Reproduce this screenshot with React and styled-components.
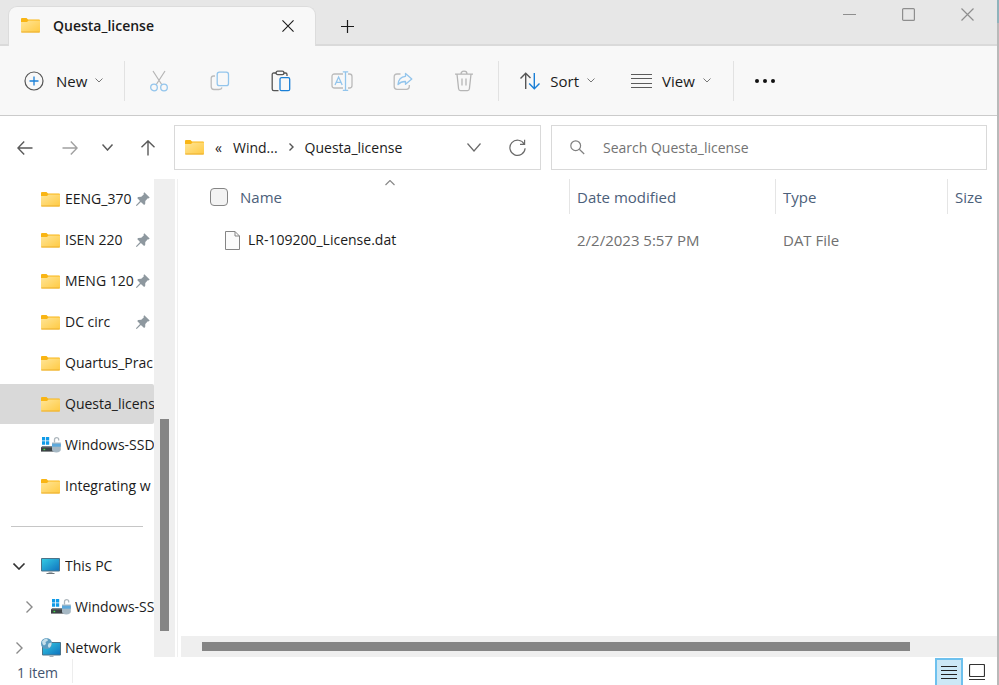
import React, { useState } from 'react';
import styled, { createGlobalStyle } from 'styled-components';

const GlobalStyle = createGlobalStyle`
    * {
        box-sizing: border-box;
    }
    body {
        margin: 0;
        background: #FFFFFF;
        color: #1B1B1B;
        font-family: "Open Sans", "Noto Sans", sans-serif;
        font-size: 14px;
        line-height: 20px;
    }
    button, input {
        font: inherit;
        color: inherit;
    }
    svg {
        display: block;
        flex-shrink: 0;
        fill: none;
    }
`;

const Window = styled.div`
    height: 100vh;
    display: flex;
    flex-direction: column;
    overflow: hidden;
    border-right: 2px solid;
    border-image: linear-gradient(#8FB3BB 24px, #B9B9B9 24px) 1;
`;

const PlainButton = styled.button`
    display: flex;
    align-items: center;
    justify-content: center;
    padding: 0;
    border: 0;
    background: none;
    cursor: pointer;
`;

/* title bar */
const TitleBar = styled.header`
    flex: none;
    height: 46px;
    display: flex;
    align-items: flex-end;
    padding-left: 8px;
    background: #E7E7E7;
    box-shadow: inset 0 -2px #DADADA;
`;
const Tab = styled.div`
    width: 308px;
    height: 40px;
    display: flex;
    align-items: center;
    gap: 13px;
    padding: 0 15px 2px 12px;
    border: 1px solid #DCDCDC;
    border-bottom: 0;
    border-radius: 9px 9px 0 0;
    background: #F8F8F8;
`;
const TabTitle = styled.span`
    flex: 1;
    font-weight: 600;
`;
const TabClose = styled(PlainButton)`
    width: 24px;
    height: 24px;
`;
const NewTab = styled(PlainButton)`
    width: 40px;
    height: 40px;
    margin-left: 11px;
`;
const WindowButtons = styled.div`
    align-self: flex-start;
    display: flex;
    margin-left: auto;
`;
const WindowButton = styled(PlainButton)`
    width: 59px;
    height: 28px;
    color: #8E8E8E;
`;

/* command bar */
const Toolbar = styled.div`
    flex: none;
    height: 70px;
    display: flex;
    align-items: center;
    padding-left: 24px;
    background: #F8F8F8;
    border-bottom: 1px solid #CBCBCB;
    font-size: 15px;
`;
const MenuButton = styled(PlainButton)`
    height: 40px;
`;
const MenuText = styled.span`
    margin: 0 8px 0 ${props => props.$gap || 10}px;
`;
const IconButton = styled(PlainButton)`
    width: 61px;
    height: 40px;
`;
const Divider = styled.span`
    width: 1px;
    height: 40px;
    margin: 0 ${props => props.$right || 0}px 0 ${props => props.$left || 0}px;
    background: #E2E2E2;
`;
const MenuGroup = styled.div`
    display: flex;
    gap: 35px;
`;

/* address row */
const AddressRow = styled.div`
    flex: none;
    height: 63px;
    display: grid;
    grid-template-columns: 170px minmax(0, 367fr) 10px minmax(0, 436fr);
    align-items: center;
    padding: 0 10px 0 4px;
`;
const NavButtons = styled.div`
    display: flex;
`;
const NavButton = styled(PlainButton)`
    flex: none;
    width: ${props => props.$w}px;
    height: 40px;
    color: ${props => (props.disabled ? '#A0A0A0' : '#5A5A5A')};
`;
const AddressBar = styled.nav`
    height: 45px;
    display: flex;
    align-items: center;
    gap: 11px;
    padding: 0 14px 0 10px;
    border: 1px solid #D9D9D9;
`;
const Crumb = styled.a`
    color: #1B1B1B;
    text-decoration: none;
    white-space: nowrap;
`;
const AddressButtons = styled.div`
    display: flex;
    gap: 27px;
    margin-left: auto;
    color: #6A6A6A;
`;
const SearchBox = styled.label`
    grid-column: 4;
    height: 45px;
    display: flex;
    align-items: center;
    gap: 18px;
    padding-left: 18px;
    border: 1px solid #D9D9D9;
`;
const SearchInput = styled.input`
    flex: 1;
    min-width: 0;
    padding: 0;
    border: 0;
    outline: 0;
    background: none;
    &::placeholder {
        color: #737373;
        opacity: 1;
    }
`;

/* body */
const Main = styled.main`
    flex: 1;
    min-height: 0;
    display: flex;
`;
const Sidebar = styled.aside`
    flex: none;
    width: 178px;
    display: flex;
    overflow: hidden;
    border-right: 1px solid #F0F0F0;
`;
const Tree = styled.ul`
    flex: 1;
    min-width: 0;
    margin: 0;
    padding: 0;
    list-style: none;
    overflow: hidden;
`;
const TreeItem = styled.li`
    height: 41px;
`;
const TreeLine = styled.li`
    height: 39px;
    display: flex;
    align-items: center;
    padding: 0 11px;
    &::after {
        content: "";
        flex: 1;
        height: 1px;
        background: #C6C6C6;
    }
`;
const TreeButton = styled(PlainButton)`
    width: 100%;
    height: 40px;
    justify-content: flex-start;
    padding-left: ${props => (props.$nested ? 21 : 11)}px;
    border-radius: 0 2px 2px 0;
    background: ${props => (props.$active ? '#D9D9D9' : 'none')};
`;
const Twist = styled.span`
    flex: none;
    width: 16px;
    margin-right: 14px;
    display: flex;
    justify-content: center;
    color: ${props => (props.$open ? '#333333' : '#8A8A8A')};
`;
const TreeLabel = styled.span`
    flex: 1;
    min-width: 0;
    margin-left: ${props => (props.$wide ? 4 : 5)}px;
    overflow: hidden;
    text-align: left;
    white-space: nowrap;
`;
const PinSlot = styled.span`
    flex: none;
    width: 20px;
    padding-left: 2px;
`;
const VerticalTrack = styled.div`
    flex: none;
    width: 21px;
    margin-right: 2px;
    display: flex;
    flex-direction: column;
    align-items: center;
    justify-content: flex-end;
    padding-bottom: 26px;
    background: #EFEFEF;
`;
const VerticalThumb = styled.div`
    width: 9px;
    height: 47%;
    background: #858585;
`;

const Files = styled.section`
    flex: 1;
    min-width: 0;
    display: flex;
    flex-direction: column;
    padding-left: 3px;
`;
const FileArea = styled.div`
    flex: 1;
    min-height: 0;
    padding-left: 29px;
    overflow: hidden;
`;
const Table = styled.table`
    width: 100%;
    table-layout: fixed;
    border-collapse: separate;
    border-spacing: 0;
    font-size: 15px;
    text-align: left;
    white-space: nowrap;
`;
const HeadCell = styled.th`
    position: relative;
    width: ${props => (props.$w ? `${props.$w}px` : 'auto')};
    height: 35px;
    padding: 0 0 0 ${props => (props.$first ? 0 : 7)}px;
    border-left: ${props => (props.$first ? 0 : 1)}px solid #E5E5E5;
    color: #4C607A;
    font-weight: 400;
`;
const NameHead = styled.div`
    display: flex;
    align-items: center;
    gap: 12px;
`;
const SortMark = styled.span`
    position: absolute;
    top: 1px;
    left: 50%;
    margin-left: -5px;
    color: #8A8A8A;
`;
const CheckBox = styled.input`
    appearance: none;
    width: 18px;
    height: 18px;
    margin: 0;
    border: 1px solid #858585;
    border-radius: 4px;
    background: #F3F3F3;
    &:checked {
        background: #0078D4;
    }
`;
const Cell = styled.td`
    height: 52px;
    padding: 0 0 0 ${props => (props.$first ? 15 : 8)}px;
    color: ${props => (props.$first ? '#1B1B1B' : '#707070')};
`;
const FileName = styled.div`
    display: flex;
    align-items: center;
    gap: 8px;
    font-size: 14px;
`;
const HorizontalTrack = styled.div`
    flex: none;
    height: 21px;
    display: flex;
    align-items: center;
    padding-left: 21px;
    background: #EFEFEF;
`;
const HorizontalThumb = styled.div`
    width: 89%;
    height: 9px;
    background: #858585;
`;

/* status bar */
const StatusBar = styled.footer`
    flex: none;
    height: 28px;
    display: flex;
    align-items: center;
    padding: 0 6px 0 17px;
    color: #44546F;
`;
const StatusText = styled.span`
    width: 56px;
    padding-top: 4px;
    border-right: 1px solid #EDEDED;
`;
const ViewButtons = styled.div`
    align-self: flex-end;
    display: flex;
    margin-left: auto;
`;
const ViewButton = styled(PlainButton)`
    width: 28px;
    height: 27px;
    border: ${props => (props.$active ? '2px solid #6EC1EE' : '0')};
    border-bottom: 0;
    background: ${props => (props.$active ? '#CCE8F6' : 'none')};
`;

const FolderIcon = () => (
    <svg width="19" height="15" viewBox="0 0 19 15">
        <defs>
            <linearGradient id="folder" x1="0" y1="0" x2="1" y2="1">
                <stop offset="0" stopColor="#FFE597" />
                <stop offset="1" stopColor="#FFCA42" />
            </linearGradient>
        </defs>
        <path d="M0 1Q0 0 1 0H5.5L7 1.5H18Q19 1.5 19 2.5V5H0Z" fill="#F9B514" />
        <path d="M0 4H6L7.5 2.6H19V13.5Q19 14.5 18 14.5H1Q0 14.5 0 13.5Z" fill="url(#folder)" />
        <path d="M0.3 14H18.7" stroke="#EBAE2C" />
    </svg>
);

const PinIcon = () => (
    <svg width="14" height="14" viewBox="0 0 14 14">
        <path d="M8.3 0.3L13.7 5.5L12.4 6.6L11.8 6.3L9.3 9.1L9.2 12L8.1 12.9L4.9 10L1 13.8L0 13.9L0.2 12.9L4 9L1.2 6L2.2 4.9L5.3 4.8L7.9 2.2L7.5 1.2Z" fill="#8E989F" />
    </svg>
);

const DriveIcon = () => (
    <svg width="20" height="16" viewBox="0 0 20 16">
        <path d="M1 0H4.2V3.5H1ZM5 0H8.2V3.5H5ZM1 4.3H4.2V7.8H1ZM5 4.3H8.2V7.8H5Z" fill="#109BE8" />
        <path d="M1.2 9H12V10.5H0Z" fill="#7D858A" />
        <path d="M0 10.2H17V14.6H0Z" fill="#3B4145" />
        <path d="M2.5 11.8H4.2V13.2H2.5Z" fill="#45E04B" />
        <path d="M13.5 5.5V2.7Q13.5 0.7 15.6 0.7Q17.7 0.7 17.7 2.7V3.5" stroke="#AEB7BD" strokeWidth="1.3" />
        <path d="M11 5.5H19.8V12.5Q19.8 15.2 15.4 15.6Q11 15.2 11 12.5Z" fill="#A6B8C4" />
        <path d="M11 6.7H19.8V9.7H11Z" fill="#5DA9DC" />
    </svg>
);

const Screen = () => (
    <>
        <defs>
            <linearGradient id="screen" x1="0" y1="0" x2="1" y2="1">
                <stop offset="0" stopColor="#35CDE4" />
                <stop offset="1" stopColor="#0F71BE" />
            </linearGradient>
        </defs>
        <path d="M0.5 0.5H18.5V13H0.5Z" fill="url(#screen)" stroke="#4C7389" />
        <path d="M7.5 13.5H11.5V15H7.5Z" fill="#A9B1B6" />
        <path d="M5.5 15H13.5V16H5.5Z" fill="#6D757A" />
    </>
);

const PcIcon = () => (
    <svg width="20" height="16" viewBox="0 0 20 16">
        <Screen />
    </svg>
);

const NetworkIcon = () => (
    <svg width="20" height="20" viewBox="0 0 20 20">
        <g transform="translate(1 4)">
            <Screen />
        </g>
        <circle cx="5.5" cy="5.5" r="5.5" fill="#5D9CC0" />
        <path d="M1 3.5Q3 0.5 6 0.5L7 2.5L4.5 4L5 6L3 7.5L1.5 6ZM7.5 5.5L10.5 4.5Q10.8 8 8 10L6.8 8Z" fill="#C6DFEA" />
    </svg>
);

const FileIcon = () => (
    <svg width="15" height="19" viewBox="0 0 15 19">
        <path d="M0.5 0.5H10L14.5 5V18.5H0.5Z" fill="#FBFBFB" stroke="#858585" />
        <path d="M10 0.5V5H14.5" stroke="#858585" />
    </svg>
);

const Chevron = ({ w = 8, h = 4, sw = 1, dir = 'down', color = 'currentColor' }) => {
    const d = {
        down: `M0.5 0.5L${w / 2} ${h}L${w - 0.5} 0.5`,
        up: `M0.5 ${h}L${w / 2} 0.5L${w - 0.5} ${h}`,
        right: `M0.5 0.5L${w} ${h / 2}L0.5 ${h - 0.5}`,
    };
    return (
        <svg width={w + 1} height={h + 1} stroke={color} strokeWidth={sw}>
            <path d={d[dir]} />
        </svg>
    );
};

const Cross = ({ size }) => (
    <svg width={size} height={size} viewBox="0 0 13 13" stroke="currentColor" strokeWidth="1.2">
        <path d="M0.5 0.5L12.5 12.5M12.5 0.5L0.5 12.5" />
    </svg>
);

const NewIcon = () => (
    <svg width="20" height="20" viewBox="0 0 20 20">
        <circle cx="10" cy="10" r="9" stroke="#555555" strokeWidth="1.2" />
        <path d="M10 5.5V14.5M5.5 10H14.5" stroke="#1A7FD6" strokeWidth="1.3" />
    </svg>
);

const CutIcon = () => (
    <svg width="20" height="22" viewBox="0 0 20 22" strokeWidth="1.2">
        <path d="M4 1L12.7 14.5M16 1L7.3 14.5" stroke="#B5B5B5" />
        <circle cx="5" cy="17.5" r="3.3" stroke="#93C5EC" strokeWidth="1.3" />
        <circle cx="15" cy="17.5" r="3.3" stroke="#93C5EC" strokeWidth="1.3" />
    </svg>
);

const CopyIcon = () => (
    <svg width="20" height="20" viewBox="0 0 20 20" strokeWidth="1.3">
        <path d="M5 5H3.5Q1.2 5 1.2 7.3V15.5Q1.2 18.5 4 18.5H9Q11.5 18.5 12 16.5" stroke="#BBBBBB" />
        <rect x="7.2" y="1.2" width="11.3" height="13.5" rx="2.2" stroke="#93C5EC" />
    </svg>
);

const PasteIcon = () => (
    <svg width="20" height="22" viewBox="0 0 20 22" strokeWidth="1.3">
        <path d="M5.5 3H2.8Q1.2 3 1.2 4.6V19Q1.2 20.6 2.8 20.6H7.5M12.5 3H14.5Q16 3 16 4.6V6" stroke="#555555" />
        <rect x="5" y="1.2" width="8" height="3.4" rx="1.7" stroke="#555555" />
        <rect x="9" y="7.7" width="9.7" height="13" rx="1.5" fill="#F8F8F8" stroke="#1A7FD6" />
    </svg>
);

const RenameIcon = () => (
    <svg width="22" height="20" viewBox="0 0 22 20" strokeWidth="1.3">
        <path d="M12 3H3.5Q1 3 1 5.5V14.5Q1 17 3.5 17H12M17 3H18.5Q21 3 21 5.5V14.5Q21 17 18.5 17H17" stroke="#BBBBBB" />
        <path d="M4 14L7.6 6L11.2 14M5.3 11.3H9.9M14.5 1V19.4M11.8 0.8H17.2M11.8 19.4H17.2" stroke="#93C5EC" />
    </svg>
);

const ShareIcon = () => (
    <svg width="20" height="20" viewBox="0 0 20 20" strokeWidth="1.3">
        <path d="M7.5 3H4Q1.2 3 1.2 5.8V15.5Q1.2 18.3 4 18.3H13.5Q16.3 18.3 16.3 15.5V14" stroke="#BBBBBB" />
        <path d="M12.5 2.5L18.8 8L12.5 13.3V10.5Q8 10.3 5 13.5Q5.5 6 12.5 5.3Z" stroke="#93C5EC" strokeLinejoin="round" />
    </svg>
);

const DeleteIcon = () => (
    <svg width="20" height="22" viewBox="0 0 20 22" strokeWidth="1.3" stroke="#B5B5B5">
        <path d="M1 4.2H19M7 4Q7 1.2 10 1.2Q13 1.2 13 4M3 4.2L4.6 18.8Q4.8 20.6 6.5 20.6H13.5Q15.2 20.6 15.4 18.8L17 4.2M8 8.5V15.5M12 8.5V15.5" />
    </svg>
);

const SortIcon = () => (
    <svg width="20" height="18" viewBox="0 0 20 18" strokeWidth="1.4">
        <path d="M5.7 17V1.5M0.5 6.5L5.7 1.2L10.5 6" stroke="#555555" />
        <path d="M14.3 1V16.5M9.2 11.5L14.3 16.8L19.5 11.5" stroke="#1A7FD6" />
    </svg>
);

const ViewIcon = () => (
    <svg width="21" height="14" viewBox="0 0 21 14" stroke="#5C5C5C">
        <path d="M0 0.5H21M0 4.5H21M0 9.5H21M0 13.5H21" />
    </svg>
);

const DotsIcon = () => (
    <svg width="22" height="6" viewBox="0 0 22 6">
        <circle cx="3" cy="3" r="2" fill="#111111" />
        <circle cx="11" cy="3" r="2" fill="#111111" />
        <circle cx="19" cy="3" r="2" fill="#111111" />
    </svg>
);

const ArrowIcon = ({ turn = 0 }) => (
    <svg width="16" height="16" viewBox="0 0 16 16" stroke="currentColor" strokeWidth="1.4">
        <path d="M15.5 8H1M7.2 1.5L0.9 8L7.2 14.5" transform={`rotate(${turn} 8 8)`} />
    </svg>
);

const RefreshIcon = () => (
    <svg width="17" height="18" viewBox="0 0 17 18" stroke="currentColor" strokeWidth="1.2">
        <path d="M15.2 5.2A7.6 7.6 0 1 0 16.1 9.2M15.6 0.8V5.3H11" />
    </svg>
);

const SearchIcon = () => (
    <svg width="15" height="15" viewBox="0 0 15 15" stroke="#808080" strokeWidth="1.2">
        <circle cx="5.7" cy="5.7" r="4.9" />
        <path d="M9.3 9.3L14.2 14" />
    </svg>
);

const tree = [
    { label: 'EENG_370', icon: FolderIcon, pinned: true },
    { label: 'ISEN 220', icon: FolderIcon, pinned: true },
    { label: 'MENG 120', icon: FolderIcon, pinned: true },
    { label: 'DC circ', icon: FolderIcon, pinned: true },
    { label: 'Quartus_Prac', icon: FolderIcon },
    { label: 'Questa_license', icon: FolderIcon },
    { label: 'Windows-SSD', icon: DriveIcon, wide: true },
    { label: 'Integrating w', icon: FolderIcon },
    { line: true },
    { label: 'This PC', icon: PcIcon, wide: true, open: true },
    { label: 'Windows-SSD', icon: DriveIcon, wide: true, nested: true, open: false },
    { label: 'Network', icon: NetworkIcon, wide: true, open: false },
];

const files = [
    { name: 'LR-109200_License.dat', date: '2/2/2023 5:57 PM', type: 'DAT File', size: '' },
];

const commands = [
    { name: 'Cut', icon: CutIcon },
    { name: 'Copy', icon: CopyIcon },
    { name: 'Paste', icon: PasteIcon },
    { name: 'Rename', icon: RenameIcon },
    { name: 'Share', icon: ShareIcon },
    { name: 'Delete', icon: DeleteIcon },
];

function MenuItem({ icon: Icon, text, gap }) {
    return (
        <MenuButton>
            <Icon />
            <MenuText $gap={gap}>{text}</MenuText>
            <Chevron color="#777777" />
        </MenuButton>
    );
}

function TreeRow({ item, active, onSelect }) {
    const Icon = item.icon;
    return (
        <TreeItem>
            <TreeButton $nested={item.nested} $active={active} onClick={onSelect}>
                <Twist $open={item.open}>
                    {item.open === true && <Chevron w={12} h={6} sw={1.6} />}
                    {item.open === false && <Chevron w={6} h={12} sw={1.4} dir="right" />}
                </Twist>
                <Icon />
                <TreeLabel $wide={item.wide}>{item.label}</TreeLabel>
                {item.pinned && <PinSlot><PinIcon /></PinSlot>}
            </TreeButton>
        </TreeItem>
    );
}

function App() {
    const [selected, setSelected] = useState(5);

    return (
        <>
            <GlobalStyle />
            <Window>
                <TitleBar>
                    <Tab>
                        <FolderIcon />
                        <TabTitle>Questa_license</TabTitle>
                        <TabClose aria-label="Close tab"><Cross size={12} /></TabClose>
                    </Tab>
                    <NewTab aria-label="New tab">
                        <svg width="13" height="13" stroke="#1B1B1B" strokeWidth="1.2">
                            <path d="M6.5 0V13M0 6.5H13" />
                        </svg>
                    </NewTab>
                    <WindowButtons>
                        <WindowButton aria-label="Minimize">
                            <svg width="13" height="1" stroke="currentColor"><path d="M0 0.5H13" /></svg>
                        </WindowButton>
                        <WindowButton aria-label="Maximize">
                            <svg width="13" height="13" stroke="currentColor" strokeWidth="1.2">
                                <rect x="0.6" y="0.6" width="11.8" height="11.8" rx="1" />
                            </svg>
                        </WindowButton>
                        <WindowButton aria-label="Close"><Cross size={13} /></WindowButton>
                    </WindowButtons>
                </TitleBar>

                <Toolbar>
                    <MenuItem icon={NewIcon} text="New" gap={12} />
                    <Divider $left={20} $right={3} />
                    {commands.map(({ name, icon: Icon }) => (
                        <IconButton key={name} aria-label={name}><Icon /></IconButton>
                    ))}
                    <Divider $left={4} $right={21} />
                    <MenuGroup>
                        <MenuItem icon={SortIcon} text="Sort" />
                        <MenuItem icon={ViewIcon} text="View" />
                    </MenuGroup>
                    <Divider $left={21} $right={1} />
                    <IconButton aria-label="See more"><DotsIcon /></IconButton>
                </Toolbar>

                <AddressRow>
                    <NavButtons>
                        <NavButton $w={42} aria-label="Back"><ArrowIcon /></NavButton>
                        <NavButton $w={48} aria-label="Forward" disabled><ArrowIcon turn={180} /></NavButton>
                        <NavButton $w={28} aria-label="Recent locations"><Chevron w={11} h={6} sw={1.5} /></NavButton>
                        <NavButton $w={52} aria-label="Up"><ArrowIcon turn={90} /></NavButton>
                    </NavButtons>
                    <AddressBar>
                        <FolderIcon />
                        <Crumb href="#more">«</Crumb>
                        <Crumb href="#windows">Wind...</Crumb>
                        <Chevron w={4} h={8} sw={1.4} dir="right" color="#555555" />
                        <Crumb href="#questa">Questa_license</Crumb>
                        <AddressButtons>
                            <PlainButton aria-label="Previous locations"><Chevron w={14} h={8} sw={1.2} /></PlainButton>
                            <PlainButton aria-label="Refresh"><RefreshIcon /></PlainButton>
                        </AddressButtons>
                    </AddressBar>
                    <SearchBox>
                        <SearchIcon />
                        <SearchInput type="text" aria-label="Search" placeholder="Search Questa_license" />
                    </SearchBox>
                </AddressRow>

                <Main>
                    <Sidebar>
                        <Tree>
                            {tree.map((item, i) => (
                                item.line
                                    ? <TreeLine key={i} />
                                    : <TreeRow key={i} item={item} active={i === selected} onSelect={() => setSelected(i)} />
                            ))}
                        </Tree>
                        <VerticalTrack><VerticalThumb /></VerticalTrack>
                    </Sidebar>
                    <Files>
                        <FileArea>
                            <Table>
                                <thead>
                                    <tr>
                                        <HeadCell $first>
                                            <NameHead>
                                                <CheckBox type="checkbox" aria-label="Select all" />
                                                Name
                                            </NameHead>
                                            <SortMark><Chevron w={10} h={5} sw={1.2} dir="up" /></SortMark>
                                        </HeadCell>
                                        <HeadCell $w={206}>Date modified</HeadCell>
                                        <HeadCell $w={172}>Type</HeadCell>
                                        <HeadCell $w={50}>Size</HeadCell>
                                    </tr>
                                </thead>
                                <tbody>
                                    {files.map(file => (
                                        <tr key={file.name}>
                                            <Cell $first>
                                                <FileName><FileIcon />{file.name}</FileName>
                                            </Cell>
                                            <Cell>{file.date}</Cell>
                                            <Cell>{file.type}</Cell>
                                            <Cell>{file.size}</Cell>
                                        </tr>
                                    ))}
                                </tbody>
                            </Table>
                        </FileArea>
                        <HorizontalTrack><HorizontalThumb /></HorizontalTrack>
                    </Files>
                </Main>

                <StatusBar>
                    <StatusText>1 item</StatusText>
                    <ViewButtons>
                        <ViewButton $active aria-label="Details">
                            <svg width="16" height="15" stroke="#222222">
                                <path d="M0 1.5H16M0 5.5H16M0 9.5H16M0 13.5H16" />
                            </svg>
                        </ViewButton>
                        <ViewButton aria-label="Large icons">
                            <svg width="16" height="16" stroke="#333333">
                                <rect x="0.5" y="0.5" width="15" height="12" rx="1" strokeWidth="1.2" />
                                <path d="M0 15.5H16" />
                            </svg>
                        </ViewButton>
                    </ViewButtons>
                </StatusBar>
            </Window>
        </>
    );
}

export default App;
